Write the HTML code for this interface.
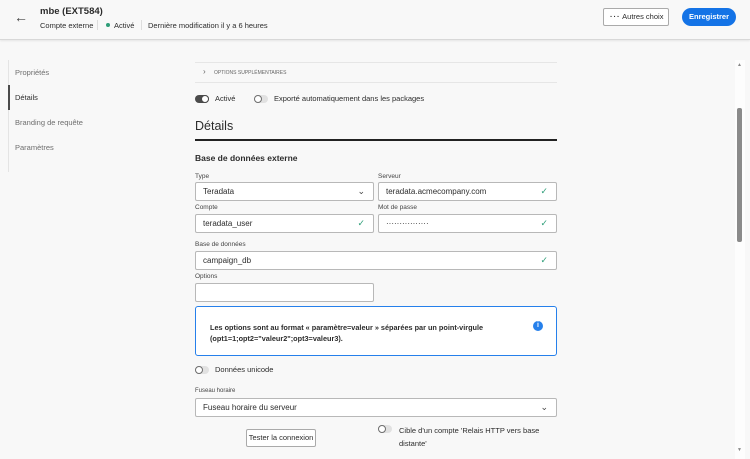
<!DOCTYPE html>
<html><head><meta charset="utf-8"><style>
*{box-sizing:border-box;margin:0;padding:0}
body{width:750px;height:459px;overflow:hidden;background:#f8f8f8;font-family:"Liberation Sans",sans-serif;color:#2c2c2c;position:relative;font-size:8px}
.a{position:absolute}
.hdr{left:0;top:0;width:750px;height:40px;background:#f8f8f8;border-bottom:1px solid #d8d8d8;box-shadow:0 1px 2px rgba(0,0,0,.08)}
.lbl{font-size:6.5px;color:#444}
.inp{background:#fff;border:1px solid #b8b8b8;border-radius:2px;height:19px;font-size:8px;padding:0 7px;line-height:17px}
.chk{position:absolute;right:8px;top:0;color:#2d9d78;font-size:9px}
.tg{position:absolute;left:0;top:0;width:14px;height:8px;border-radius:4px;background:#e1e1e1}
.tg i{position:absolute;left:0;top:0;width:8px;height:8px;border-radius:50%;border:1.3px solid #6e6e6e;background:#fff}
.tg.on{background:#4b4b4b}
.tg.on i{left:6px;border-color:#4b4b4b}
.tl{position:absolute;left:20px;top:-1px;font-size:7.5px;white-space:nowrap}
</style></head><body>
<div class="a hdr"></div>
<div class="a" style="left:14px;top:9px;font-size:14px;color:#444">←</div>
<div class="a" style="left:40px;top:6px;font-size:9.5px;font-weight:bold">mbe (EXT584)</div>
<div class="a" style="left:40px;top:21px;font-size:7.5px">Compte externe</div>
<div class="a" style="left:97px;top:20px;width:1px;height:10px;background:#ddd"></div>
<div class="a" style="left:106px;top:23px;width:4px;height:4px;border-radius:50%;background:#2d9d78"></div>
<div class="a" style="left:114px;top:21px;font-size:7.5px">Activé</div>
<div class="a" style="left:141px;top:20px;width:1px;height:10px;background:#ddd"></div>
<div class="a" style="left:148px;top:21px;font-size:7.5px">Dernière modification il y a 6 heures</div>
<div class="a" style="left:603px;top:8px;width:66px;height:18px;border:1px solid #aaa;background:#fff;border-radius:2px;font-size:7.5px;line-height:16px;padding-left:6px"><b style="letter-spacing:1px">···</b> Autres choix</div>
<div class="a" style="left:682px;top:8px;width:54px;height:18px;border-radius:9px;background:#1473e6;color:#fff;font-size:7.5px;font-weight:bold;line-height:18px;text-align:center">Enregistrer</div>

<div class="a" style="left:8px;top:60px;width:1px;height:112px;background:#e4e4e4"></div>
<div class="a" style="left:8px;top:85px;width:2px;height:25px;background:#4b4b4b"></div>
<div class="a" style="left:15px;top:68px;font-size:7.5px;color:#6e6e6e">Propriétés</div>
<div class="a" style="left:15px;top:93px;font-size:7.5px;color:#2c2c2c">Détails</div>
<div class="a" style="left:15px;top:118px;font-size:7.5px;color:#6e6e6e">Branding de requête</div>
<div class="a" style="left:15px;top:143px;font-size:7.5px;color:#6e6e6e">Paramètres</div>

<div class="a" style="left:195px;top:62px;width:362px;height:21px;border-top:1px solid #e6e6e6;border-bottom:1px solid #e6e6e6"></div>
<div class="a" style="left:203px;top:67px;font-size:8px;color:#666">›</div>
<div class="a" style="left:214px;top:70px;font-size:5px;color:#666">OPTIONS SUPPLÉMENTAIRES</div>
<div class="a" style="left:195px;top:95px"><span class="tg on"><i></i></span><span class="tl">Activé</span></div>
<div class="a" style="left:254px;top:95px"><span class="tg"><i></i></span><span class="tl">Exporté automatiquement dans les packages</span></div>
<div class="a" style="left:195px;top:119px;font-size:12.5px">Détails</div>
<div class="a" style="left:195px;top:139px;width:362px;height:2px;background:#222"></div>
<div class="a" style="left:195px;top:153px;font-size:8.5px;font-weight:bold">Base de données externe</div>

<div class="a lbl" style="left:195px;top:173px">Type</div>
<div class="a inp" style="left:195px;top:182px;width:179px">Teradata<span class="chk" style="color:#444">⌄</span></div>
<div class="a lbl" style="left:378px;top:173px">Serveur</div>
<div class="a inp" style="left:378px;top:182px;width:179px">teradata.acmecompany.com<span class="chk">✓</span></div>
<div class="a lbl" style="left:195px;top:204px">Compte</div>
<div class="a inp" style="left:195px;top:214px;width:179px">teradata_user<span class="chk">✓</span></div>
<div class="a lbl" style="left:378px;top:204px">Mot de passe</div>
<div class="a inp" style="left:378px;top:214px;width:179px">················<span class="chk">✓</span></div>
<div class="a lbl" style="left:195px;top:241px">Base de données</div>
<div class="a inp" style="left:195px;top:251px;width:362px">campaign_db<span class="chk">✓</span></div>
<div class="a lbl" style="left:195px;top:273px">Options</div>
<div class="a inp" style="left:195px;top:283px;width:179px"></div>

<div class="a" style="left:195px;top:306px;width:362px;height:50px;border:1.5px solid #2680eb;border-radius:3px;background:#fff"></div>
<div class="a" style="left:210px;top:322px;font-size:7.3px;font-weight:bold;line-height:11px">Les options sont au format « paramètre=valeur » séparées par un point-virgule<br>(opt1=1;opt2="valeur2";opt3=valeur3).</div>
<div class="a" style="left:533px;top:321px;width:10px;height:10px;border-radius:50%;background:#2680eb;color:#fff;font-size:7px;font-weight:bold;text-align:center;line-height:10px">i</div>

<div class="a" style="left:195px;top:366px"><span class="tg"><i></i></span><span class="tl">Données unicode</span></div>
<div class="a lbl" style="left:195px;top:388px;font-size:6px">Fuseau horaire</div>
<div class="a inp" style="left:195px;top:398px;width:362px">Fuseau horaire du serveur<span class="chk" style="color:#444">⌄</span></div>
<div class="a" style="left:246px;top:429px;width:70px;height:18px;border:1px solid #aaa;background:#fff;border-radius:2px;font-size:7.5px;text-align:center;line-height:16px">Tester la connexion</div>
<div class="a" style="left:378px;top:425px"><span class="tg"><i></i></span></div>
<div class="a" style="left:399px;top:424px;font-size:7.5px;line-height:13px">Cible d'un compte 'Relais HTTP vers base<br>distante'</div>

<div class="a" style="left:735px;top:60px;width:10px;height:399px;background:#fdfdfd"></div>
<div class="a" style="left:737px;top:62px;font-size:5px;color:#888">▲</div>
<div class="a" style="left:737px;top:108px;width:5px;height:134px;border-radius:2px;background:#8a8a8a"></div>
<div class="a" style="left:737px;top:447px;font-size:5px;color:#888">▼</div>
</body></html>
